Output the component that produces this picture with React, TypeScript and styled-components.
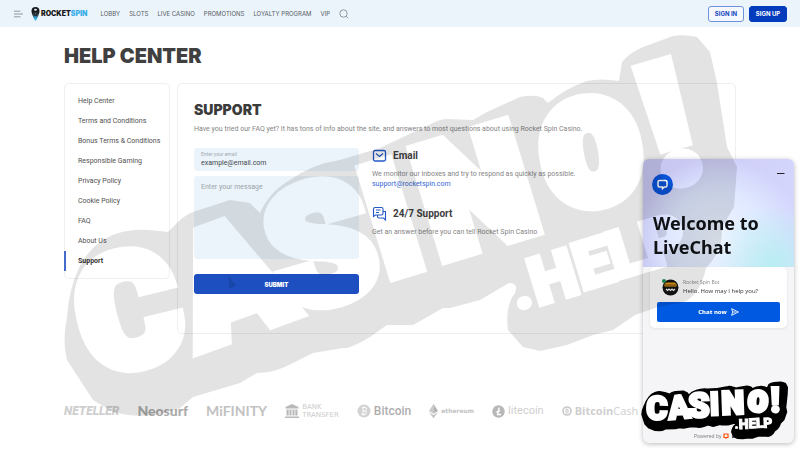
import React from "react";
import styled, { createGlobalStyle, css } from "styled-components";

const GlobalStyle = createGlobalStyle`
  * { box-sizing: border-box; }
  body {
    margin: 0;
    background: #fff;
    color: #454545;
    font-family: Roboto, "Liberation Sans", sans-serif;
    font-size: 7px;
    line-height: 10px;
    overflow-x: hidden;
  }
  h1, h2, h3, p, ul { margin: 0; padding: 0; }
  a { color: inherit; text-decoration: none; }
  button, input, textarea { font-family: inherit; margin: 0; }
  svg { display: block; flex: none; }
`;

const display = css`
  font-family: Inter, "Liberation Sans", sans-serif;
`;

const Header = styled.header`
  display: flex;
  align-items: center;
  height: 27px;
  padding: 0 13px 0 14px;
  background: #ecf4fb;
`;

const IconButton = styled.button`
  display: flex;
  padding: 0;
  border: 0;
  background: none;
  color: #7b838b;
`;

const Brand = styled.a`
  ${display}
  display: flex;
  align-items: center;
  gap: 1px;
  margin-left: 8px;
  color: #161616;
  font-size: 7px;
  font-weight: 900;
  span { color: #35aee8; }
`;

const Nav = styled.nav`
  ${display}
  display: flex;
  flex: 1;
  align-items: center;
  gap: 9px;
  margin-left: 13px;
  color: #555b62;
  font-size: 6px;
  font-weight: 400;
`;

const Auth = styled.div`
  display: flex;
  gap: 5px;
`;

const AuthButton = styled.button<{ $solid?: boolean }>`
  ${display}
  height: 16px;
  min-width: ${(p) => (p.$solid ? 38 : 36)}px;
  padding: 0 5px;
  border: 1px solid ${(p) => (p.$solid ? "#033bbd" : "#6d92dc")};
  border-radius: 3px;
  background: ${(p) => (p.$solid ? "#033bbd" : "#f5f9ff")};
  color: ${(p) => (p.$solid ? "#fff" : "#1746be")};
  font-size: 6px;
  line-height: 8px;
  font-weight: 700;
`;

const Page = styled.main`
  padding: 17px 8% 0;
`;

const PageTitle = styled.h1`
  ${display}
  color: #404040;
  font-size: 20px;
  line-height: 24px;
  font-weight: 900;
`;

const Columns = styled.div`
  display: grid;
  grid-template-columns: 106px 1fr;
  gap: 7px;
  align-items: start;
  margin-top: 15px;
`;

const SideMenu = styled.nav`
  padding: 7px 0;
  border: 1px solid #efefef;
  border-radius: 5px;
`;

const MenuLink = styled.a<{ $active?: boolean }>`
  display: flex;
  align-items: center;
  height: 20px;
  margin-left: -1px;
  padding-left: 12px;
  border-left: 2px solid ${(p) => (p.$active ? "#446bc9" : "transparent")};
  font-weight: ${(p) => (p.$active ? 700 : 400)};
  color: ${(p) => (p.$active ? "#333" : "#505050")};
  white-space: nowrap;
`;

const Card = styled.section`
  min-height: 251px;
  padding: 17px 16px 16px;
  border: 1px solid #efefef;
  border-radius: 5px;
`;

const SectionTitle = styled.h2`
  ${display}
  margin-bottom: 5px;
  color: #3b3b3b;
  font-size: 14px;
  line-height: 18px;
  font-weight: 900;
`;

const Muted = styled.p`
  color: #858585;
`;

const SupportGrid = styled.div`
  display: grid;
  grid-template-columns: 165px 1fr;
  gap: 13px;
  margin-top: 14px;
`;

const Form = styled.form`
  display: flex;
  flex-direction: column;
`;

const Field = styled.label`
  display: flex;
  flex-direction: column;
  height: 23px;
  padding: 3px 7px;
  border-radius: 3px;
  background: #ecf4fb;
  color: #a2a9b0;
  font-size: 5px;
  line-height: 7px;
`;

const EmailInput = styled.input`
  width: 100%;
  height: 10px;
  padding: 0;
  border: 0;
  outline: 0;
  background: transparent;
  color: #414950;
  font-size: 7px;
`;

const Message = styled.textarea`
  height: 83px;
  margin-top: 5px;
  padding: 6px 7px;
  border: 0;
  border-radius: 3px;
  background: #ecf4fb;
  font-size: 7px;
  line-height: 10px;
  resize: none;
  &::placeholder { color: #9aa2aa; }
`;

const Submit = styled.button`
  ${display}
  height: 20px;
  margin-top: 15px;
  border: 0;
  border-radius: 3px;
  background: #1d4fc1;
  color: #fff;
  font-size: 6px;
  font-weight: 900;
`;

const Contacts = styled.div`
  display: flex;
  flex-direction: column;
  gap: 17px;
`;

const ContactTitle = styled.h3`
  display: flex;
  align-items: center;
  gap: 6px;
  height: 15px;
  margin-bottom: 6px;
  color: #3e3e3e;
  font-size: 10px;
  line-height: 15px;
  font-weight: 700;
`;

const MailLink = styled.a`
  color: #3567d3;
`;

const Payments = styled.ul`
  display: flex;
  align-items: center;
  gap: 18px;
  height: 24px;
  margin-top: 65px;
  list-style: none;
`;

const Payment = styled.li<{
  $size: number;
  $weight?: number;
  $italic?: boolean;
  $tone?: string;
  $face?: string;
}>`
  display: flex;
  align-items: center;
  gap: 3px;
  color: ${(p) => p.$tone ?? "#c2c2c2"};
  font-family: ${(p) => p.$face ?? "Roboto"}, sans-serif;
  font-size: ${(p) => p.$size}px;
  font-weight: ${(p) => p.$weight ?? 400};
  font-style: ${(p) => (p.$italic ? "italic" : "normal")};
  line-height: 16px;
  white-space: nowrap;
  b { font-weight: 700; }
`;

const StackedName = styled.span`
  display: grid;
  line-height: 8px;
`;

const Chat = styled.aside`
  position: fixed;
  right: 6px;
  bottom: 7px;
  width: 151px;
  height: 284px;
  display: flex;
  flex-direction: column;
  border-radius: 6px;
  overflow: hidden;
  background: #f5f5f7;
  box-shadow: 0 1px 5px rgba(0, 0, 0, 0.28);
  font-family: "Noto Sans", "Open Sans", sans-serif;
`;

const ChatTop = styled.div`
  height: 108px;
  padding: 8px 9px 0;
  background:
    radial-gradient(circle at 86% 98%, #b9eef3 0, rgba(185, 238, 243, 0) 36%),
    radial-gradient(circle at 50% 75%, #eef5ff 0, #dfe8ff 45%, rgba(208, 216, 255, 0) 75%),
    linear-gradient(100deg, #c5c4ef, #d6d7ff);
`;

const ChatBar = styled.div`
  display: flex;
  justify-content: space-between;
  align-items: flex-start;
  margin-bottom: 16px;
  > svg { margin-top: 7px; }
`;

const ChatTitle = styled.h2`
  padding-left: 1px;
  color: #101216;
  font-size: 18px;
  line-height: 24px;
  font-weight: 700;
  white-space: nowrap;
`;

const ChatCard = styled.div`
  margin: 0 7px;
  padding: 11px 7px 6px;
  border-radius: 5px;
  background: #fff;
  box-shadow: 0 1px 3px rgba(0, 0, 0, 0.08);
`;

const Bot = styled.div`
  display: flex;
  align-items: center;
  gap: 4px;
  height: 18px;
  margin-bottom: 6px;
  padding-left: 4px;
`;

const BotText = styled.div`
  display: flex;
  flex-direction: column;
  color: #333;
  font-family: "Open Sans", sans-serif;
  font-size: 6px;
  line-height: 9px;
  white-space: nowrap;
  small { color: #888; font-size: 5px; line-height: 9px; }
`;

const ChatNow = styled.button`
  display: flex;
  align-items: center;
  justify-content: center;
  gap: 4px;
  width: 100%;
  height: 20px;
  padding: 0;
  border: 0;
  border-radius: 2px;
  background: #0059e1;
  color: #fff;
  font-size: 6px;
  font-weight: 800;
`;

const Powered = styled.p`
  display: flex;
  align-items: center;
  gap: 2px;
  margin-top: auto;
  padding: 0 0 3px 51px;
  color: #777;
  font-family: "Open Sans", sans-serif;
  font-size: 5px;
  line-height: 8px;
  b { color: #333; }
`;

const Watermark = styled.svg`
  position: fixed;
  inset: 0;
  width: 100%;
  height: 100%;
  z-index: 2;
  pointer-events: none;
`;

const CornerLogo = styled.svg`
  position: fixed;
  right: 0;
  bottom: 0;
  width: 172px;
  height: 80px;
  z-index: 3;
  pointer-events: none;
`;

const silhouette =
  "M67 317 Q69 290 78 270 Q86 252 100 242 Q113 233 127 231 Q140 229 150 230 L168 232 L178 222 Q185 215 193 212 L230 200 L250 203 L260 213 Q270 191 290 180 Q312 164 340 160 L380 148 L403 137 L433 123 Q441 119 447 119 L473 120 L487 112 L520 97 Q535 94 543 98 L548 103 Q566 88 587 81 Q602 78 619 81 L622 62 Q629 53 643 47 L673 36 Q684 34 697 37 L710 52 L717 83 L727 147 L737 167 L734 207 L722 227 Q723 251 706 268 Q702 286 695 293 Q686 305 673 304 L658 307 L635 315 L613 330 L593 335 L567 345 L540 351 L523 347 L508 330 Q505 306 515 293 Q519 283 509 283 L480 300 L450 308 L443 308 L413 325 L387 325 L370 337 Q350 349 343 348 L313 353 L293 363 Q275 373 257 373 L240 383 L193 397 L180 408 Q147 421 113 412 L93 400 L67 360 Q62 341 67 317 Z";

type Letter = { ch: string; x: number; y: number; size: number; turn: number; fat: number };

const letters: Letter[] = [
  { ch: "C", x: 128, y: 310, size: 154, turn: -14, fat: 14 },
  { ch: "A", x: 230, y: 280, size: 156, turn: -20, fat: 12 },
  { ch: "S", x: 320, y: 244, size: 164, turn: -16, fat: 14 },
  { ch: "I", x: 391, y: 219, size: 156, turn: -17, fat: 12 },
  { ch: "N", x: 475, y: 190, size: 154, turn: -17, fat: 16 },
  { ch: "O", x: 591, y: 152, size: 132, turn: -10, fat: 22 },
  { ch: "!", x: 668, y: 123, size: 168, turn: -16, fat: 12 },
  { ch: ".", x: 519, y: 285, size: 68, turn: -17, fat: 3 },
  { ch: "H", x: 553, y: 277, size: 66, turn: -17, fat: 5 },
  { ch: "E", x: 593, y: 263, size: 66, turn: -17, fat: 5 },
  { ch: "L", x: 627, y: 252, size: 66, turn: -17, fat: 5 },
  { ch: "P", x: 664, y: 241, size: 66, turn: -17, fat: 5 },
];

function Lettering({ color }: { color: string }) {
  return (
    <g
      fill={color}
      stroke={color}
      strokeLinejoin="miter"
      fontFamily="Roboto, sans-serif"
      fontWeight={900}
      textAnchor="middle"
    >
      {letters.map((l) => (
        <text
          key={l.ch}
          fontSize={l.size}
          strokeWidth={l.fat}
          transform={`translate(${l.x} ${l.y}) rotate(${l.turn})`}
          y={Math.round(l.size * 0.355)}
        >
          {l.ch}
        </text>
      ))}
    </g>
  );
}

const menu = [
  "Help Center",
  "Terms and Conditions",
  "Bonus Terms & Conditions",
  "Responsible Gaming",
  "Privacy Policy",
  "Cookie Policy",
  "FAQ",
  "About Us",
  "Support",
];

const navItems = ["LOBBY", "SLOTS", "LIVE CASINO", "PROMOTIONS", "LOYALTY PROGRAM", "VIP"];

export default function App() {
  return (
    <>
      <GlobalStyle />
      <Header>
        <IconButton aria-label="Menu">
          <svg width="9" height="8" viewBox="0 0 9 8" stroke="currentColor" strokeWidth="0.8">
            <path d="M0 1.2h6.5M0 4h9M0 6.8h6.5" />
          </svg>
        </IconButton>
        <Brand href="#">
          <svg width="9" height="14" viewBox="0 0 9 14">
            <path d="M2.6 9h3.8L6 11.8 4.5 14 3 11.8z" fill="#35aee8" />
            <path d="M4.5 0C7 0 8.7 1.6 8.5 4.2 8.4 6 7.4 8 6.7 9.8H2.3C1.6 8 .6 6 .5 4.2.3 1.6 2 0 4.5 0z" fill="#171b20" />
            <path d="M1.5 7.5 3 11.5 4.5 9.5 6 11.5 7.5 7.5 6 9H3z" fill="#2e7fa9" />
            <ellipse cx="4.5" cy="2.8" rx="1.5" ry="1" fill="#dfe7ec" />
            <path d="M3 5.5v3M4.5 5.5v3M6 5.5v3" stroke="#71808a" strokeWidth="0.5" />
          </svg>
          <div>ROCKET<span>SPIN</span></div>
        </Brand>
        <Nav aria-label="Main">
          {navItems.map((n) => (
            <a href="#" key={n}>{n}</a>
          ))}
          <IconButton aria-label="Search">
            <svg width="10" height="10" viewBox="0 0 10 10" fill="none" stroke="currentColor" strokeWidth="0.8">
              <circle cx="4.5" cy="4.5" r="3.7" />
              <path d="m7.2 7.2 2 2" />
            </svg>
          </IconButton>
        </Nav>
        <Auth>
          <AuthButton>SIGN IN</AuthButton>
          <AuthButton $solid>SIGN UP</AuthButton>
        </Auth>
      </Header>

      <Page>
        <PageTitle>HELP CENTER</PageTitle>
        <Columns>
          <SideMenu aria-label="Help topics">
            {menu.map((m) => (
              <MenuLink href="#" key={m} $active={m === "Support"}>{m}</MenuLink>
            ))}
          </SideMenu>
          <Card>
            <SectionTitle>SUPPORT</SectionTitle>
            <Muted>
              Have you tried our FAQ yet? It has tons of info about the site, and answers to most questions about using Rocket Spin Casino.
            </Muted>
            <SupportGrid>
              <Form onSubmit={(e) => e.preventDefault()}>
                <Field>
                  Enter your email
                  <EmailInput type="email" defaultValue="example@email.com" />
                </Field>
                <Message aria-label="Enter your message" placeholder="Enter your message" />
                <Submit type="submit">SUBMIT</Submit>
              </Form>
              <Contacts>
                <div>
                  <ContactTitle>
                    <svg width="15" height="15" viewBox="0 0 15 15" fill="none" stroke="#2458c6" strokeWidth="1.3">
                      <rect x="1.5" y="2.5" width="12" height="10.5" rx="1.5" />
                      <path d="m4 5.5 3.5 3 3.5-3" />
                    </svg>
                    Email
                  </ContactTitle>
                  <Muted>We monitor our inboxes and try to respond as quickly as possible.</Muted>
                  <MailLink href="mailto:support@rocketspin.com">support@rocketspin.com</MailLink>
                </div>
                <div>
                  <ContactTitle>
                    <svg width="15" height="15" viewBox="0 0 15 15" fill="none" stroke="#2458c6" strokeWidth="1.1">
                      <path d="M1.5 10.5V3q0-1.5 1.5-1.5h6.5Q11 1.5 11 3v4.5Q11 9 9.500 9H3.5z" />
                      <path d="M4 4h4.5M4 6.5h3M11 5.5h2.5V14l-2-2H7q-1.5 0-1.5-1.5V9" />
                    </svg>
                    24/7 Support
                  </ContactTitle>
                  <Muted>Get an answer before you can tell Rocket Spin Casino</Muted>
                </div>
              </Contacts>
            </SupportGrid>
          </Card>
        </Columns>

        <Payments>
          <Payment $size={12} $weight={900} $italic $tone="#cfcfcf">NETELLER</Payment>
          <Payment $size={14} $weight={900} $tone="#ababab" $face="Lato">Neosurf</Payment>
          <Payment $size={14} $weight={700} $face="Lato">MiFINITY</Payment>
          <Payment $size={7} $tone="#cbcbcb" $face="DejaVu Sans">
            <svg width="14" height="14" viewBox="0 0 14 14" fill="#b9b9b9">
              <path d="M7 0 13.5 3v1.500H.5V3zM1.5 5.5h2.200v6H1.5zM4.5 5.5h2v6h-2zM7.5 5.5h2v6h-2zM10.3 5.5h2.200v6h-2.200zM0 12.5h14V14H0z" />
            </svg>
            <StackedName>
              <span>BANK</span>
              <span>TRANSFER</span>
            </StackedName>
          </Payment>
          <Payment $size={12} $weight={500} $tone="#aeaeae">
            <svg width="14" height="14" viewBox="0 0 14 14">
              <circle cx="7" cy="7" r="6.5" fill="#d2d2d2" />
              <path d="M5 3.5h3q2 0 1.5 2-.2 1-1.200 1.300 1.400.4 1 2Q9 10.5 7 10.5H4.5M6 3.5v7M6 7h2.500M7 2.300v1.200M7 10.5v1.200" fill="none" stroke="#fff" />
            </svg>
            Bitcoin
          </Payment>
          <Payment $size={6} $weight={700} $face="DejaVu Sans">
            <svg width="9" height="16" viewBox="0 0 10 16">
              <path d="M5 0 0 8l5 3z" fill="#c9c9c9" />
              <path d="m5 0 5 8-5 3z" fill="#b4b4b4" />
              <path d="m0 9.500 5 3 5-3L5 16z" fill="#c4c4c4" />
            </svg>
            ethereum
          </Payment>
          <Payment $size={11} $tone="#cfcfcf">
            <svg width="13" height="13" viewBox="0 0 13 13">
              <circle cx="6.5" cy="6.5" r="6.2" fill="#b8b8b8" />
              <path d="M7.2 2.5 5.5 9.5H9M4.3 7.2 8 5.8" fill="none" stroke="#fff" strokeWidth="1.3" />
            </svg>
            litecoin
          </Payment>
          <Payment $size={11} $tone="#cfcfcf" $face="Open Sans">
            <svg width="10" height="10" viewBox="0 0 10 10" fill="none" stroke="#c8c8c8">
              <circle cx="5" cy="5" r="4" strokeWidth="1.6" />
              <path d="M4 3h1.500q1.500 1 0 2 2 1 0 2H4z" />
            </svg>
            <span><b>Bitcoin</b>Cash</span>
          </Payment>
        </Payments>
      </Page>

      <Chat aria-label="Live chat">
        <ChatTop>
          <ChatBar>
            <svg width="21" height="21" viewBox="0 0 21 21">
              <circle cx="10.5" cy="10.5" r="10.5" fill="#0753d8" />
              <path d="M7.500 6.500h6q1.500 0 1.500 1.500v3.500q0 1.500-1.500 1.500h-1l-2 1.700V13h-3Q6 13 6 11.500V8Q6 6.500 7.500 6.500z" fill="none" stroke="#fff" strokeWidth="1.5" />
            </svg>
            <IconButton aria-label="Minimize">
              <svg width="9" height="14" viewBox="0 0 9 14"><path d="M1 6.500h7.500" stroke="#222" strokeWidth="1.2" /></svg>
            </IconButton>
          </ChatBar>
          <ChatTitle>Welcome to<br />LiveChat</ChatTitle>
        </ChatTop>
        <ChatCard>
          <Bot>
            <svg width="18" height="18" viewBox="0 0 18 18">
              <circle cx="9.5" cy="9.5" r="8" fill="#151515" />
              <path d="m3.5 6 2-1.500h8l2 1.500v2.500h-12z" fill="#e59b19" />
              <path d="M4 7h11" stroke="#68440a" />
              <path d="m5 11 1.500 1.500L8 11l1.500 1.500L11 11l1.500 1.500L14 11" fill="none" stroke="#fff" strokeWidth="1.2" />
              <circle cx="3" cy="3" r="2" fill="#1d9558" />
            </svg>
            <BotText><small>Rocket Spin Bot</small>Hello. How may I help you?</BotText>
          </Bot>
          <ChatNow>
            Chat now
            <svg width="8" height="8" viewBox="0 0 8 8" fill="none" stroke="#fff" strokeWidth="0.9">
              <path d="M.6.7 7.4 4 .6 7.3 1.8 4zM1.8 4h3" />
            </svg>
          </ChatNow>
        </ChatCard>
        <Powered>
          Powered by
          <svg width="6" height="6" viewBox="0 0 6 6"><path d="M1 1h4v3.5H3.5L3 5.2V4.5H1z" fill="none" stroke="#ff5100" strokeWidth="1.2" /></svg>
          <b>LiveChat</b>
        </Powered>
      </Chat>

      <Watermark viewBox="0 0 800 450" aria-hidden="true">
        <mask id="cutout" maskUnits="userSpaceOnUse" x="0" y="0" width="800" height="450">
          <path d={silhouette} fill="#fff" />
          <Lettering color="#000" />
        </mask>
        <rect width="800" height="450" fill="#000" fillOpacity="0.11" mask="url(#cutout)" />
      </Watermark>
      <CornerLogo viewBox="628 370 172 80" aria-hidden="true">
        <g transform="translate(648 339) rotate(15) scale(.207)">
          <path d={silhouette} fill="#000" stroke="#000" strokeWidth="8" strokeLinejoin="round" />
          <Lettering color="#fff" />
        </g>
      </CornerLogo>
    </>
  );
}
